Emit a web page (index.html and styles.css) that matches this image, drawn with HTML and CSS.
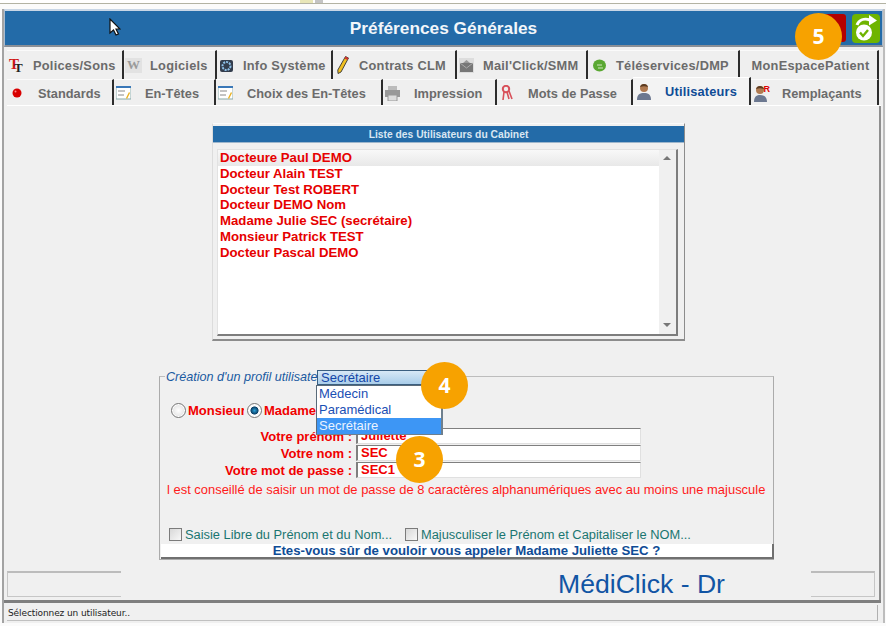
FILE: index.html
```html
<!DOCTYPE html>
<html lang="fr">
<head>
<meta charset="utf-8">
<title>Préférences Générales</title>
<link rel="stylesheet" href="styles.css">
</head>
<body>
<div class="page">
  <div class="topstrip"><span class="tick-a"></span><span class="tick-b"></span></div>
  <div class="window">
    <header class="titlebar">
      <span></span>
      <h1>Préférences Générales</h1>
      <div class="title-btns">
        <span class="btn-red"></span>
        <span class="btn-green">
          <svg width="28" height="29" viewBox="0 0 28 29"><circle cx="12" cy="18.500" r="8" fill="#fff"/><path d="M8 18.500l3 3.500 5-6" fill="none" stroke="#6fb400" stroke-width="2.400"/><path d="M5 11C7 6 12 4 18 6" fill="none" stroke="#fff" stroke-width="3"/><path d="M17 1l8 5.500-8 5z" fill="#fff"/></svg>
        </span>
      </div>
    </header>

    <nav class="tabs">
      <div class="tabrow row-one">
        <div class="tab"><span class="ico ico-tt"><b class="t1">T</b><b class="t2">T</b></span><span>Polices/Sons</span></div>
        <div class="tab"><span class="ico ico-w">W</span><span>Logiciels</span></div>
        <div class="tab"><span class="ico"><svg width="15" height="15" viewBox="0 0 15 15"><rect x="1" y="2" width="13" height="12" rx="2" fill="#333d4d"/><circle cx="7.500" cy="8" r="4" fill="none" stroke="#8fc0e8" stroke-width="2" stroke-dasharray="2 1"/></svg></span><span>Info Système</span></div>
        <div class="tab"><span class="ico"><svg width="14" height="20" viewBox="0 0 14 20"><path d="M9.500 1.500l3 1.500-7.500 14-3 1.500-.2-3.500z" fill="#f0c020" stroke="#333" stroke-width=".9"/><path d="M9.500 1.500l3 1.500-1 2-3-1.500z" fill="#c33"/></svg></span><span>Contrats CLM</span></div>
        <div class="tab"><span class="ico"><svg width="15" height="15" viewBox="0 0 15 15"><rect x="0" y="0" width="15" height="15" fill="#ddd"/><rect x="1" y="5" width="13" height="9" fill="#777"/><path d="M1 5l6.500 5L14 5" fill="none" stroke="#aaa"/><path d="M4 5l3.500-3L11 5z" fill="#999"/></svg></span><span>Mail'Click/SMM</span></div>
        <div class="tab tab-tele"><span class="ico"><svg width="15" height="13" viewBox="0 0 15 13"><ellipse cx="7.500" cy="6.500" rx="6.500" ry="6" fill="#5aa832"/><path d="M5 6h5M6 9h5" stroke="#cfe9bd"/></svg></span><span>Téléservices/DMP</span></div>
        <div class="tab tab-plain"><span>MonEspacePatient</span></div>
      </div>
      <div class="tabrow row-two">
        <div class="tab"><span class="ico"><svg width="10" height="10" viewBox="0 0 10 10"><circle cx="5" cy="5" r="4.500" fill="#d80000"/><circle cx="3.500" cy="3.500" r="1" fill="#f88"/></svg></span><span>Standards</span></div>
        <div class="tab"><span class="ico"><svg width="15" height="14" viewBox="0 0 15 14"><rect width="15" height="13" fill="#fff" stroke="#8aa"/><rect width="15" height="2" fill="#3a78b8"/><path d="M2 5h7M2 9h6" stroke="#888"/><path d="M10 12l3-6 1 1-3 6z" fill="#e9b020"/></svg></span><span>En-Têtes</span></div>
        <div class="tab"><span class="ico"><svg width="15" height="14" viewBox="0 0 15 14"><rect width="15" height="13" fill="#fff" stroke="#8aa"/><rect width="15" height="2" fill="#3a78b8"/><path d="M2 5h7M2 9h6" stroke="#888"/><path d="M10 12l3-6 1 1-3 6z" fill="#e9b020"/></svg></span><span>Choix des En-Têtes</span></div>
        <div class="tab"><span class="ico"><svg width="15" height="15" viewBox="0 0 15 15"><rect x="3" y="0" width="9" height="5" fill="#bbb"/><rect x="0" y="4" width="15" height="7" fill="#999"/><rect x="3" y="9" width="9" height="6" fill="#ddd" stroke="#999"/></svg></span><span>Impression</span></div>
        <div class="tab"><span class="ico"><svg width="12" height="16" viewBox="0 0 12 16"><circle cx="5" cy="4" r="3.200" fill="none" stroke="#d8505a" stroke-width="2"/><path d="M3 7l-1 8M6 7l2 7M8 6l3 8" stroke="#d8505a" stroke-width="1.600" fill="none"/></svg></span><span>Mots de Passe</span></div>
        <div class="tab tab-active"><span class="ico"><svg width="14" height="17" viewBox="0 0 14 17"><circle cx="7" cy="5" r="4" fill="#b07a50"/><path d="M3 4c1-4 7-4 8 0-3-1-5-1-8 0z" fill="#5a3a20"/><path d="M0 17c0-6 3-7 7-7s7 1 7 7z" fill="#6c7890"/></svg></span><span>Utilisateurs</span></div>
        <div class="tab"><span class="ico ico-rep"><svg width="14" height="17" viewBox="0 0 14 17"><circle cx="6" cy="5" r="4" fill="#b07a50"/><path d="M2 4c1-4 7-4 8 0-3-1-5-1-8 0z" fill="#5a3a20"/><path d="M0 17c0-6 3-7 6-7s7 1 7 7z" fill="#6c7890"/></svg><b class="rep-r">R</b></span><span>Remplaçants</span></div>
      </div>
    </nav>

    <main class="content">
      <section class="userlist">
        <h2>Liste des Utilisateurs du Cabinet</h2>
        <div class="listframe">
          <ul>
            <li class="current">Docteure Paul DEMO</li>
            <li>Docteur Alain TEST</li>
            <li>Docteur Test ROBERT</li>
            <li>Docteur DEMO Nom</li>
            <li>Madame Julie SEC (secrétaire)</li>
            <li>Monsieur Patrick TEST</li>
            <li>Docteur Pascal DEMO</li>
          </ul>
          <div class="scroll"><span class="arrow-up"></span><span class="arrow-down"></span></div>
        </div>
      </section>

      <section class="profile">
        <div class="legend">
          <span class="legend-text">Création d'un profil utilisate</span>
          <div class="combo">Secrétaire</div>
          <div class="dropdown">
            <div>Médecin</div>
            <div>Paramédical</div>
            <div class="picked">Secrétaire</div>
          </div>
        </div>
        <div class="radios">
          <span class="radio"></span><span class="radio-label label-m">Monsieur</span>
          <span class="radio on"></span><span class="radio-label">Madame</span>
        </div>
        <div class="fields">
          <label>Votre prénom :</label><div class="input">Juliette</div>
          <label>Votre nom :</label><div class="input">SEC</div>
          <label>Votre mot de passe :</label><div class="input">SEC1</div>
        </div>
        <p class="warn">l est conseillé de saisir un mot de passe de 8 caractères alphanumériques avec au moins une majuscule</p>
        <div class="checks">
          <span class="check"></span><span class="check-label first">Saisie Libre du Prénom et du Nom...</span>
          <span class="check"></span><span class="check-label">Majusculiser le Prénom et Capitaliser le NOM...</span>
        </div>
        <div class="confirm">Etes-vous sûr de vouloir vous appeler Madame Juliette SEC ?</div>
      </section>

      <section class="brandbox"><span class="brand">MédiClick - Dr</span></section>
    </main>

    <footer class="status"><div class="status-box"><span>Sélectionnez un utilisateur..</span></div></footer>
  </div>

  <svg class="cursor" width="12" height="18" viewBox="0 0 12 18"><path d="M1 1v14l3.500-3 2.500 5 2.500-1-2.500-5H11z" fill="#fff" stroke="#111" stroke-width="1.200"/></svg>
  <span class="bubble b5">5</span>
  <span class="bubble b4">4</span>
  <span class="bubble b3">3</span>
</div>
</body>
</html>
```
FILE: styles.css
```css
* { box-sizing: border-box; }
html, body { margin: 0; padding: 0; }
body { background: #fff; font-family: "Liberation Sans", Arial, sans-serif; }
.page { position: relative; width: 886px; height: 626px; overflow: hidden; background: #fbfbfb; }

.topstrip { position: relative; height: 4px; border-bottom: 1px solid #b3b3a3; background: #fff; }
.tick-a { position: absolute; left: 300px; top: 0; width: 13px; height: 3px; background: #e8e6b8; }
.tick-b { position: absolute; left: 315px; top: 0; width: 8px; height: 3px; background: #c4c4c4; }

.window { margin: 5px 1px 0 2px; height: 614px; border-left: 2px solid #a3a3a3; border-right: 2px solid #bdbdbd; background: #f0f0f0; display: flex; flex-direction: column; }

.titlebar { flex: none; height: 38px; border: 1px solid #a9bcd0; border-bottom: 2px solid #8a8f96; border-top: 2px solid #c8d6e6; background: #236ba8; display: grid; grid-template-columns: 1fr auto 1fr; align-items: center; }
.titlebar h1 { margin: 0; font-size: 17.300px; font-weight: 700; color: #f2f6fa; }
.title-btns { display: flex; justify-content: flex-end; gap: 6px; padding-right: 2px; }
.btn-red { width: 27px; height: 28px; background: #b40000; border-radius: 3px; }
.btn-green { width: 28px; height: 29px; background: #6fb400; border-radius: 4px; display: block; }
.btn-green svg { display: block; }

.tabs { flex: none; margin-top: 3px; }
.tabrow { display: grid; width: 874px; margin-left: 3px; }
.row-one { height: 29px; grid-template-columns: 117px 93px 116px 124px 131px 152px 139px; }
.row-two { height: 27px; grid-template-columns: 107px 102px 167px 114px 136px 118px 128px; border-bottom: 1px solid #fff; }
.tab { position: relative; display: flex; align-items: center; padding-left: 1px; background: #efefef; border-right: 2px solid #2c2c2c; border-top: 1px solid #fafafa; font-size: 12.800px; font-weight: 700; color: #6b6b6b; letter-spacing: .25px; white-space: nowrap; }
.row-two .tab { letter-spacing: 0; padding-top: 1px; }
.ico { flex: none; width: 17px; height: 20px; display: flex; align-items: center; justify-content: center; margin-right: 8px; position: relative; }
.ico svg { display: block; }
.row-two .ico { margin-right: 13px; }
.ico-tt .t1 { position: absolute; left: 1px; top: 1px; font: 700 15px "Liberation Serif", serif; color: #d01818; }
.ico-tt .t2 { position: absolute; left: 6px; top: 5px; font: 700 13px "Liberation Serif", serif; color: #222; }
.ico-w { background: #e2e2e2; color: #9a9a9a; font: 700 13px "Liberation Serif", serif; height: 15px; }
.rep-r { position: absolute; right: -1px; top: 1px; font-size: 9px; color: #d00; }
.tab-tele { padding-left: 3px; }
.tab-plain { justify-content: center; padding-left: 4px; }
.row-two .tab-active { margin-top: -2px; padding-top: 0; padding-left: 2px; letter-spacing: .2px; background: #f3f3f3; color: #0f4c96; border-top: 1px solid #fff; }

.content { flex: none; height: 494px; display: flex; flex-direction: column; margin-right: 2px; border-right: 2px solid #8f8f8f; padding-top: 17px; }

.userlist { flex: none; align-self: flex-start; margin-left: 208px; width: 473px; height: 218px; padding: 1px 0 0 0; border: 1px solid #fafafa; border-right-color: #8c8c8c; border-bottom: 2px solid #8c8c8c; border-left-color: #dcdcdc; background: #f0f0f0; display: flex; flex-direction: column; }
.userlist h2 { margin: 1px 0 0; height: 17px; line-height: 17px; background: #236ba8; color: #d9e6f2; font-size: 10.300px; font-weight: 700; text-align: center; border-bottom: 1px solid #9db6cc; }
.listframe { margin: 6px 6px 3px 4px; flex: 1; display: flex; background: #fff; border: 1px solid #e2e2e2; border-right: 2px solid #7d7d7d; border-bottom: 2px solid #7d7d7d; }
.listframe ul { list-style: none; margin: 0; padding: 0; flex: 1; }
.listframe li { height: 15.800px; line-height: 15.800px; padding-left: 2px; font-size: 13.200px; font-weight: 700; color: #e60000; white-space: nowrap; }
.listframe li.current { background: linear-gradient(#f8f8f8, #e8e8e8); }
.scroll { position: relative; width: 17px; background: #f0f0f0; }
.arrow-up, .arrow-down { position: absolute; left: 4px; width: 0; height: 0; border-left: 4px solid transparent; border-right: 4px solid transparent; }
.arrow-up { top: 6px; border-bottom: 4px solid #777; }
.arrow-down { bottom: 7px; border-top: 4px solid #777; }

.profile { flex: none; position: relative; align-self: flex-start; margin: 35px 0 0 155px; width: 615px; height: 184px; border: 1px solid #ababab; border-top-color: #bdbdbd; }
.legend { position: absolute; left: 5px; top: -7px; width: 300px; height: 16px; display: flex; }
.legend-text { background: #f0f0f0; font-size: 12.600px; font-style: italic; color: #1a5aa0; padding-left: 1px; width: 152px; white-space: nowrap; overflow: hidden; line-height: 15px; }
.combo { width: 125px; height: 15px; line-height: 14px; padding-left: 3px; font-size: 13px; color: #1446a8; background: linear-gradient(#d7e8f6, #a9cde9); border: 1px solid #3b5f80; }
.dropdown { position: absolute; left: 151px; top: 15px; z-index: 2; width: 127px; height: 50px; background: #fff; border: 1px solid #5a6a78; border-right: 2px solid #6e7f8d; border-bottom: 2px solid #6e7f8d; font-size: 13px; color: #1a4fb4; }
.dropdown div { height: 16px; line-height: 16px; padding-left: 2px; }
.dropdown .picked { background: #3d96f5; color: #eaf3ff; }

.radios { position: absolute; left: 11px; top: 25px; display: flex; align-items: center; height: 16px; }
.radio { flex: none; width: 15px; height: 15px; border-radius: 50%; border: 1px solid #777; background: radial-gradient(#fff, #d8d8d8); box-shadow: inset 0 0 0 1px #fff; }
.radio.on { background: radial-gradient(#2aa0d8 0, #0a3f66 40%, #fff 48%, #ddd 100%); }
.radio-label { font-size: 13px; font-weight: 700; color: #f00000; margin-left: 2px; white-space: nowrap; overflow: hidden; }
.label-m { width: 56px; margin-right: 3px; }

.fields { position: absolute; left: 0; top: 51px; width: 482px; display: grid; grid-template-columns: 192px 285px; column-gap: 4px; row-gap: 1px; grid-auto-rows: 16px; }
.fields label { text-align: right; font-size: 13px; font-weight: 700; color: #f00000; line-height: 17px; white-space: nowrap; }
.input { background: #fff; border: 1px solid #e0e0e0; border-left: 2px solid #7f7f7f; border-top: 1px solid #7f7f7f; font-size: 13px; font-weight: 700; color: #f00000; line-height: 13px; padding-left: 3px; }

.warn { position: absolute; left: 7px; top: 105px; margin: 0; font-size: 12.950px; color: #ff1a1a; white-space: nowrap; }
.checks { position: absolute; left: 9px; top: 149px; display: flex; align-items: center; height: 16px; }
.check { flex: none; width: 13px; height: 13px; border: 1px solid #7b7b7b; background: linear-gradient(135deg, #d8d8d8, #f8f8f8); }
.check-label { margin-left: 3px; font-size: 12.850px; color: #1a7670; white-space: nowrap; }
.first { margin-right: 13px; }
.confirm { position: absolute; left: 1px; right: -1px; bottom: 0; height: 15px; line-height: 14px; background: #fff; border-right: 2px solid #707070; border-bottom: 2px solid #707070; text-align: center; font-size: 13.200px; font-weight: 700; color: #0f4c96; }

.brandbox { flex: none; margin: auto 4px 3px 3px; height: 26px; border: 1px solid #c6c6c6; border-top: 2px solid #bcbcbc; display: flex; justify-content: flex-end; }
.brand { margin-top: -2px; margin-right: 63px; padding-left: 437px; width: 690px; height: 27px; background: #f0f0f0; font-size: 26.600px; line-height: 27px; color: #1255a4; white-space: nowrap; }

.status { flex: 1; border-top: 3px solid #7f7f7f; margin-right: 2px; padding: 2px 3px 2px 3px; background: #f0f0f0; }
.status-box { height: 16px; padding-left: 1px; display: flex; align-items: center; border-right: 1px solid #b0b0b0; border-bottom: 1px solid #c0c0c0; }
.status span { font-family: "DejaVu Sans", sans-serif; font-size: 9px; color: #222; letter-spacing: -.1px; }

.cursor { position: absolute; left: 109px; top: 18px; }
.bubble { position: absolute; z-index: 3; width: 47px; height: 47px; border-radius: 50%; background: #f7a200; color: #fff; font-family: "Open Sans", sans-serif; font-weight: 700; font-size: 21px; line-height: 47px; text-align: center; }
.b5 { left: 795px; top: 13px; }
.b4 { left: 421px; top: 362px; }
.b3 { left: 396px; top: 436px; }
```
